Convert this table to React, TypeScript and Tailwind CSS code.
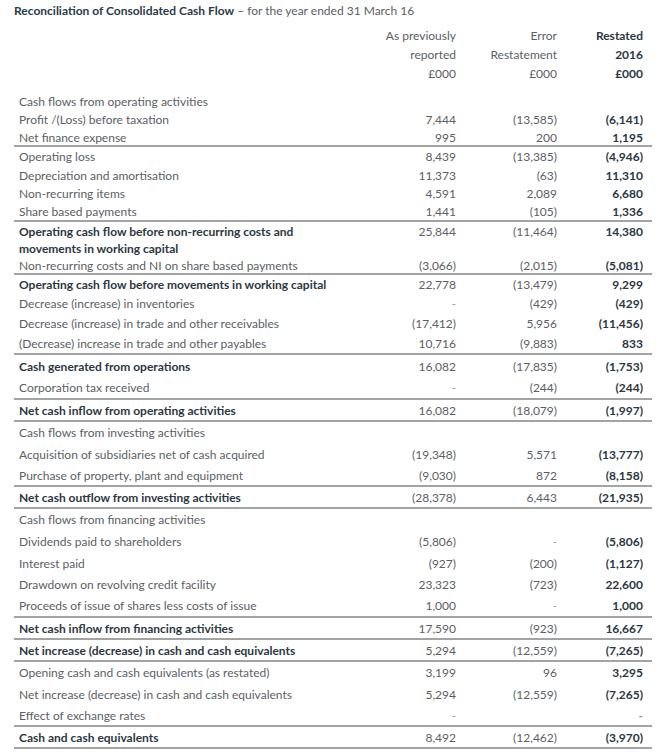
type Row = {
  label: string;
  a?: string;
  b?: string;
  c?: string;
  h: number;
  bold?: boolean;
  line?: boolean;
};

// heights follow the original print layout: tighter at the top, looser below
const rows: Row[] = [
  { label: "Cash flows from operating activities", h: 18 },
  { label: "Profit /(Loss) before taxation", a: "7,444", b: "(13,585)", c: "(6,141)", h: 19 },
  { label: "Net finance expense", a: "995", b: "200", c: "1,195", h: 18, line: true },
  { label: "Operating loss", a: "8,439", b: "(13,385)", c: "(4,946)", h: 19 },
  { label: "Depreciation and amortisation", a: "11,373", b: "(63)", c: "11,310", h: 18 },
  { label: "Non-recurring items", a: "4,591", b: "2,089", c: "6,680", h: 19 },
  { label: "Share based payments", a: "1,441", b: "(105)", c: "1,336", h: 19, line: true },
  { label: "Operating cash flow before non-recurring costs and movements in working capital", a: "25,844", b: "(11,464)", c: "14,380", h: 35, bold: true },
  { label: "Non-recurring costs and NI on share based payments", a: "(3,066)", b: "(2,015)", c: "(5,081)", h: 18, line: true },
  { label: "Operating cash flow before movements in working capital", a: "22,778", b: "(13,479)", c: "9,299", h: 19, bold: true },
  { label: "Decrease (increase) in inventories", a: "-", b: "(429)", c: "(429)", h: 19 },
  { label: "Decrease (increase) in trade and other receivables", a: "(17,412)", b: "5,956", c: "(11,456)", h: 21 },
  { label: "(Decrease) increase in trade and other payables", a: "10,716", b: "(9,883)", c: "833", h: 21, line: true },
  { label: "Cash generated from operations", a: "16,082", b: "(17,835)", c: "(1,753)", h: 22, bold: true },
  { label: "Corporation tax received", a: "-", b: "(244)", c: "(244)", h: 23, line: true },
  { label: "Net cash inflow from operating activities", a: "16,082", b: "(18,079)", c: "(1,997)", h: 22, bold: true, line: true },
  { label: "Cash flows from investing activities", h: 21 },
  { label: "Acquisition of subsidiaries net of cash acquired", a: "(19,348)", b: "5,571", c: "(13,777)", h: 22 },
  { label: "Purchase of property, plant and equipment", a: "(9,030)", b: "872", c: "(8,158)", h: 22, line: true },
  { label: "Net cash outflow from investing activities", a: "(28,378)", b: "6,443", c: "(21,935)", h: 22, bold: true, line: true },
  { label: "Cash flows from financing activities", h: 21 },
  { label: "Dividends paid to shareholders", a: "(5,806)", b: "-", c: "(5,806)", h: 22 },
  { label: "Interest paid", a: "(927)", b: "(200)", c: "(1,127)", h: 22 },
  { label: "Drawdown on revolving credit facility", a: "23,323", b: "(723)", c: "22,600", h: 21 },
  { label: "Proceeds of issue of shares less costs of issue", a: "1,000", b: "-", c: "1,000", h: 23, line: true },
  { label: "Net cash inflow from financing activities", a: "17,590", b: "(923)", c: "16,667", h: 22, bold: true, line: true },
  { label: "Net increase (decrease) in cash and cash equivalents", a: "5,294", b: "(12,559)", c: "(7,265)", h: 22, bold: true, line: true },
  { label: "Opening cash and cash equivalents (as restated)", a: "3,199", b: "96", c: "3,295", h: 21 },
  { label: "Net increase (decrease) in cash and cash equivalents", a: "5,294", b: "(12,559)", c: "(7,265)", h: 22 },
  { label: "Effect of exchange rates", a: "-", b: "", c: "-", h: 22, line: true },
  { label: "Cash and cash equivalents", a: "8,492", b: "(12,462)", c: "(3,970)", h: 22, bold: true, line: true },
];

function Cell({ v, w, strong }: { v?: string; w: string; strong?: boolean }) {
  const dash = v === "-";
  return (
    <div className={`${w} shrink-0 text-right ${strong ? "font-bold text-[#2b3742]" : "text-[#5b6066]"} ${dash ? "text-[#9a9a9a]" : ""}`}>
      {v}
    </div>
  );
}

export default function App() {
  return (
    <div className="w-[660px] h-[755px] bg-white pl-[14px] pr-[8px] text-[12px] leading-[17px]" style={{ fontFamily: "Lato, 'Open Sans', sans-serif" }}>
      <div className="h-[20px] pt-[2px] text-[#2a3b4a]">
        <span className="font-bold">Reconciliation of Consolidated Cash Flow</span>
        <span className="text-[#5b6066]"> – for the year ended 31 March 16</span>
      </div>

      <div className="flex pt-[6px] pr-[9px] h-[72px] leading-[19px]">
        <div className="flex-1" />
        <div className="w-[100px] shrink-0 text-right text-[#5b6066]">
          <div>As previously</div>
          <div>reported</div>
          <div>£000</div>
        </div>
        <div className="w-[101px] shrink-0 text-right text-[#5b6066]">
          <div>Error</div>
          <div>Restatement</div>
          <div>£000</div>
        </div>
        <div className="w-[86px] shrink-0 text-right font-bold text-[#2b3742]">
          <div>Restated</div>
          <div>2016</div>
          <div>£000</div>
        </div>
      </div>

      <div className="flex flex-col">
        {rows.map((r, i) => (
          <div
            key={i}
            className={`flex pr-[9px] ${r.h > 30 ? "items-start pt-[1px]" : "items-center"} ${r.line ? "border-b-2 border-[#a3a3a3]" : ""}`}
            style={{ height: r.h }}
          >
            <div className={`flex-1 min-w-0 pl-[5px] pr-2 ${r.bold ? "font-bold text-[#2b3742]" : "text-[#5b6066]"}`}>
              <div className={r.h > 30 ? "max-w-[300px]" : ""}>{r.label}</div>
            </div>
            <Cell v={r.a} w="w-[100px]" />
            <Cell v={r.b} w="w-[101px]" />
            <Cell v={r.c} w="w-[86px]" strong />
          </div>
        ))}
      </div>
    </div>
  );
}
